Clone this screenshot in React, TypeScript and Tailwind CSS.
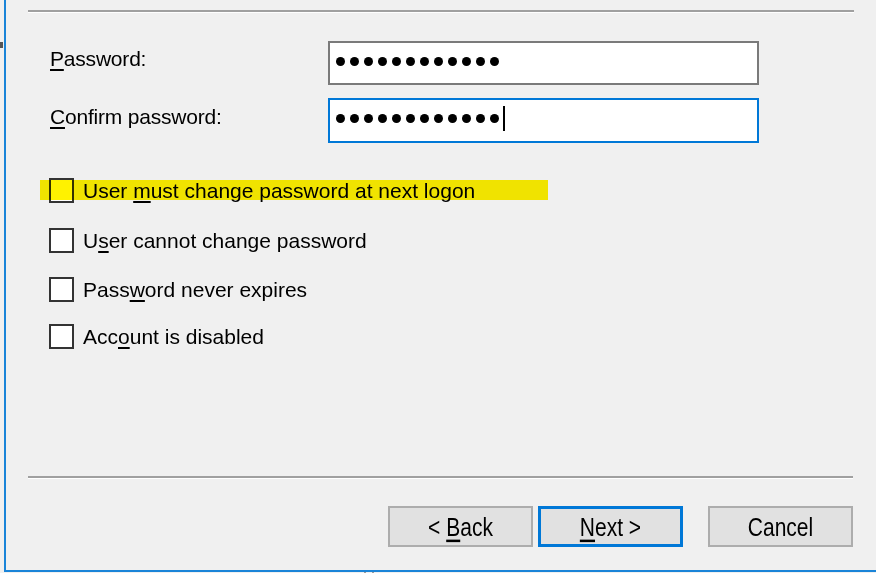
import React from 'react';

// Windows "New User" wizard, password page

const Dots: React.FC<{ count: number; caret?: boolean }> = ({ count, caret }) => (
    <div className="flex items-center gap-[5px] pl-[6px] pb-[4px] h-full">
        {Array.from({ length: count }).map((_, i) => (
            <span key={i} className="block w-[9px] h-[9px] rounded-full bg-black" />
        ))}
        {caret && <span className="block w-[2px] h-[25px] bg-black -ml-[1px]" />}
    </div>
);

const Checkbox: React.FC<{ children: React.ReactNode; className?: string }> = ({ children, className }) => (
    <div className={`flex items-center h-[25px] ${className ?? ''}`}>
        <span className="block w-[25px] h-[25px] border-2 border-[#333333] bg-white shrink-0" />
        <span className="ml-[9px]">{children}</span>
    </div>
);

const Key: React.FC<{ children: React.ReactNode }> = ({ children }) => (
    <span className="underline decoration-2 underline-offset-[3px]">{children}</span>
);

const Separator: React.FC<{ className?: string }> = ({ className }) => (
    <div className={`h-[3px] border-t-2 border-[#a0a0a0] border-b border-b-white ${className ?? ''}`} />
);

export default function App() {
    return (
        <div className="relative w-[876px] h-[573px] overflow-hidden bg-[#f0f0f0] text-black text-[21px] leading-none font-['Liberation_Sans',Arial,sans-serif]">
            <div className="ml-[4px] h-[572px] border-l-2 border-b-2 border-[#1a84d8] flex flex-col">
                <Separator className="mt-[10px] ml-[22px] w-[826px]" />

                {/* password fields */}
                <div className="pl-[44px]">
                    <div className="flex items-center mt-[28px] h-[44px]">
                        <span className="w-[278px] pb-[9px] tracking-[-0.2px]">
                            <Key>P</Key>assword:
                        </span>
                        <div className="w-[431px] h-[44px] border-2 border-[#7a7a7a] bg-white">
                            <Dots count={12} />
                        </div>
                    </div>
                    <div className="flex items-center mt-[13px] h-[45px]">
                        <span className="w-[278px] pb-[9px] tracking-[-0.2px]">
                            <Key>C</Key>onfirm password:
                        </span>
                        <div className="w-[431px] h-[45px] border-2 border-[#0078d7] bg-white">
                            <Dots count={12} caret />
                        </div>
                    </div>
                </div>

                {/* options */}
                <div className="pl-[43px]">
                    <div className="relative mt-[35px]">
                        <Checkbox>
                            User <Key>m</Key>ust change password at next logon
                        </Checkbox>
                        <div className="absolute left-[-9px] top-[2px] w-[508px] h-[20px] bg-[#fff200] mix-blend-multiply" />
                    </div>
                    <Checkbox className="mt-[25px]">
                        U<Key>s</Key>er cannot change password
                    </Checkbox>
                    <Checkbox className="mt-[24px]">
                        Pass<Key>w</Key>ord never expires
                    </Checkbox>
                    <Checkbox className="mt-[22px]">
                        Acc<Key>o</Key>unt is disabled
                    </Checkbox>
                </div>

                <Separator className="mt-[127px] ml-[22px] w-[825px]" />

                {/* wizard buttons */}
                <div className="flex mt-[27px] ml-[382px]">
                    <button className="w-[145px] h-[41px] border-2 border-[#adadad] bg-[#e1e1e1] flex items-center justify-center">
                        <span className="inline-block scale-y-[1.25]">&lt; <Key>B</Key>ack</span>
                    </button>
                    <button className="ml-[5px] w-[145px] h-[41px] border-[3px] border-[#0078d7] bg-[#e1e1e1] flex items-center justify-center">
                        <span className="inline-block scale-y-[1.25]"><Key>N</Key>ext &gt;</span>
                    </button>
                    <button className="ml-[25px] w-[145px] h-[41px] border-2 border-[#adadad] bg-[#e1e1e1] flex items-center justify-center">
                        <span className="inline-block scale-y-[1.25]">Cancel</span>
                    </button>
                </div>
            </div>

            {/* bits of the desktop peeking out */}
            <div className="absolute left-0 top-[42px] w-[3px] h-[6px] bg-[#555555]" />
            <div className="absolute left-[364px] top-[572px] w-[2px] h-[1px] bg-[#9a9a9a]" />
            <div className="absolute left-[372px] top-[572px] w-[2px] h-[1px] bg-[#9a9a9a]" />
        </div>
    );
}
